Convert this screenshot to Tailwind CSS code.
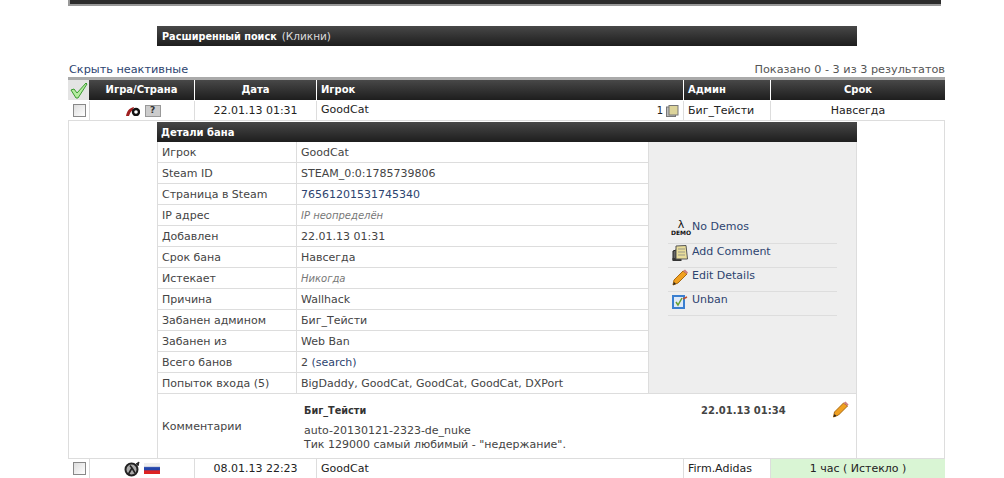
<!DOCTYPE html>
<html><head><meta charset="utf-8"><script src="https://cdn.jsdelivr.net/npm/@tailwindcss/browser@4"></script></head>
<body class="bg-white">
<div class="relative h-[478px] w-[1004px] overflow-hidden font-['DejaVu_Sans',Verdana,sans-serif] text-[11px] leading-[13px] text-[#333]">
  <div class="ml-[68px] h-[6px] w-[873px] border-b-2 border-l-2 border-[#999] bg-[#2c2c2c]"></div>
  <div class="ml-[157px] mt-[20px] flex h-[20px] w-[700px] items-center bg-gradient-to-b from-[#484848] to-[#1e1e1e] pl-[5px] text-white"><b class="text-[9.7px]">Расширенный поиск</b><span class="ml-[5px] text-[10.5px] text-[#ddd]">(Кликни)</span></div>
  <div class="ml-[69px] mt-[16px] flex h-[15px] w-[876px] items-center justify-between text-[11.25px]"><span class="text-[#2d4470]">Скрыть неактивные</span><span class="text-[#555]">Показано 0 - 3 из 3 результатов</span></div>
  <div class="ml-[68px] w-[877px]">
    <div class="h-[3px] bg-[#aaa]"></div>
    <div class="flex h-[20px] text-center text-[10px] font-bold text-white">
      <div class="flex w-[21px] items-center justify-center bg-[#e4e4e4]"><svg width="18" height="17" viewBox="0 0 18 17"><path d="M1 8 L4 7 L7 11 L16 1 L17 2 L8 16 L6 16 Z" fill="#b4eca0" stroke="#3a9a30" stroke-width="1"/></svg></div>
      <div class="w-[106px] border-r border-white bg-gradient-to-b from-[#484848] to-[#1e1e1e] leading-[20px]">Игра/Страна</div>
      <div class="w-[122px] border-r border-white bg-gradient-to-b from-[#484848] to-[#1e1e1e] leading-[20px]">Дата</div>
      <div class="w-[367px] border-r border-white bg-gradient-to-b from-[#484848] to-[#1e1e1e] pl-[4px] text-left leading-[20px]">Игрок</div>
      <div class="w-[87px] border-r border-white bg-gradient-to-b from-[#484848] to-[#1e1e1e] pl-[4px] text-left leading-[20px]">Админ</div>
      <div class="flex-1 bg-gradient-to-b from-[#484848] to-[#1e1e1e] leading-[20px]">Срок</div>
    </div>
    <div class="flex h-[21px] border-b border-[#ddd] pt-[1px] text-[#222]">
      <div class="flex w-[22px] items-center justify-center border-r border-[#ddd] pl-[1px]"><div class="size-[13px] border border-[#888] bg-gradient-to-br from-[#ddd] to-[#fff]"></div></div>
      <div class="flex w-[105px] items-center justify-center gap-[5px] border-r border-[#ddd] pl-[2px]">
        <svg width="14" height="10" viewBox="0 0 14 10"><path d="M0 10 C1 5 3 2 8 1 L7 4 C5 5 4 7 3 10 Z" fill="#a02020"/><circle cx="10" cy="6" r="3" fill="#fff" stroke="#111" stroke-width="2.4"/></svg>
        <div class="flex h-[12px] w-[16px] items-center justify-center border border-[#999] bg-[#ccc] text-[9px] font-bold text-[#333]">?</div>
      </div>
      <div class="flex w-[122px] items-center justify-center border-r border-[#ddd]">22.01.13 01:31</div>
      <div class="flex w-[367px] items-center justify-between border-r border-[#ddd] pl-[4px] pr-[4px]"><span class="-mt-[2px]">GoodCat</span>
        <span class="flex items-center gap-[3px] text-[10px]">1
          <svg width="13" height="12" viewBox="0 0 13 12"><rect x="0.5" y="2" width="9" height="9.5" fill="#bbb" stroke="#777"/><rect x="3" y="0.5" width="9" height="9.5" fill="#ddd49a" stroke="#777"/></svg></span></div>
      <div class="flex w-[87px] items-center border-r border-[#ddd] pl-[4px]">Биг_Тейсти</div>
      <div class="flex flex-1 items-center justify-center">Навсегда</div>
    </div>
    <div class="h-[338px] border border-t-0 border-[#ddd] pl-[88px] pr-[87px] pt-[1px] box-border">
      <div class="flex h-[20px] items-center bg-gradient-to-b from-[#484848] to-[#1e1e1e] pl-[4px] text-[10px] font-bold text-white">Детали бана</div>
      <div class="flex border-l border-r border-[#ddd]">
        <div class="w-[490px] text-[#444]">
          <div class="flex h-[21px] border-b border-[#ddd]"><div class="flex w-[139px] items-center border-r border-[#ddd] pl-[4px]">Игрок</div><div class="flex items-center pl-[4px]">GoodCat</div></div>
          <div class="flex h-[21px] border-b border-[#ddd]"><div class="flex w-[139px] items-center border-r border-[#ddd] pl-[4px]">Steam ID</div><div class="flex items-center pl-[4px]">STEAM_0:0:1785739806</div></div>
          <div class="flex h-[21px] border-b border-[#ddd]"><div class="flex w-[139px] items-center border-r border-[#ddd] pl-[4px]">Страница в Steam</div><div class="flex items-center pl-[4px] text-[#2d4470]">76561201531745340</div></div>
          <div class="flex h-[21px] border-b border-[#ddd]"><div class="flex w-[139px] items-center border-r border-[#ddd] pl-[4px]">IP адрес</div><div class="flex items-center pl-[4px] text-[10px] italic text-[#777]">IP неопределён</div></div>
          <div class="flex h-[21px] border-b border-[#ddd]"><div class="flex w-[139px] items-center border-r border-[#ddd] pl-[4px]">Добавлен</div><div class="flex items-center pl-[4px]">22.01.13 01:31</div></div>
          <div class="flex h-[21px] border-b border-[#ddd]"><div class="flex w-[139px] items-center border-r border-[#ddd] pl-[4px]">Срок бана</div><div class="flex items-center pl-[4px]">Навсегда</div></div>
          <div class="flex h-[21px] border-b border-[#ddd]"><div class="flex w-[139px] items-center border-r border-[#ddd] pl-[4px]">Истекает</div><div class="flex items-center pl-[4px] text-[10px] italic text-[#777]">Никогда</div></div>
          <div class="flex h-[21px] border-b border-[#ddd]"><div class="flex w-[139px] items-center border-r border-[#ddd] pl-[4px]">Причина</div><div class="flex items-center pl-[4px]">Wallhack</div></div>
          <div class="flex h-[21px] border-b border-[#ddd]"><div class="flex w-[139px] items-center border-r border-[#ddd] pl-[4px]">Забанен админом</div><div class="flex items-center pl-[4px]">Биг_Тейсти</div></div>
          <div class="flex h-[21px] border-b border-[#ddd]"><div class="flex w-[139px] items-center border-r border-[#ddd] pl-[4px]">Забанен из</div><div class="flex items-center pl-[4px]">Web Ban</div></div>
          <div class="flex h-[21px] border-b border-[#ddd]"><div class="flex w-[139px] items-center border-r border-[#ddd] pl-[4px]">Всего банов</div><div class="flex items-center pl-[4px]">2&nbsp;<span class="text-[#2d4470]">(search)</span></div></div>
          <div class="flex h-[21px] border-b border-[#ddd]"><div class="flex w-[139px] items-center border-r border-[#ddd] pl-[4px]">Попыток входа (5)</div><div class="flex items-center pl-[4px]">BigDaddy, GoodCat, GoodCat, GoodCat, DXPort</div></div>
        </div>
        <div class="flex h-[252px] flex-1 flex-col justify-center border-b border-l border-[#ddd] bg-[#eee] pl-[19px] pr-[19px] text-[#2d4470]">
          <div class="flex h-[24px] items-start gap-[2px] border-b border-[#ddd] pl-[4px]"><span class="flex w-[18px] flex-col items-center pt-[1px] text-[#111]"><span class="text-[11px] leading-[8px]">λ</span><span class="text-[6px] font-bold leading-[7px]">DEMO</span></span><span>No Demos</span></div>
          <div class="flex h-[24px] items-start gap-[4px] border-b border-[#ddd] pl-[4px] pt-[1px]"><svg class="shrink-0" width="16" height="17" viewBox="0 0 16 17"><path d="M1 6 L4 5 L4 13 L1 15 Z" fill="#666" stroke="#222"/><rect x="0.5" y="13" width="9" height="3" fill="#333"/><path d="M4 1 L14 0.5 L15.5 14 L4 14 Z" fill="#e8dc9a" stroke="#555"/><path d="M6 4h7M6 7h7M6 10h7" stroke="#998"/></svg><span>Add Comment</span></div>
          <div class="flex h-[24px] items-start gap-[4px] border-b border-[#ddd] pl-[4px] pt-[1px]"><svg class="shrink-0" width="16" height="17" viewBox="0 0 16 17"><path d="M1 16 L2 11 L11 2 L15 5 L6 14 Z" fill="#f0a020" stroke="#a86810"/><path d="M1 16 L2 13 L4 15 Z" fill="#222"/><path d="M11 2 L13 0.5 L16 3.5 L15 5 Z" fill="#d08080"/></svg><span>Edit Details</span></div>
          <div class="flex h-[24px] items-start gap-[4px] border-b border-[#ddd] pl-[4px] pt-[1px]"><svg class="shrink-0" width="16" height="17" viewBox="0 0 16 17"><rect x="1" y="3" width="11" height="12" fill="#dfeaf8" stroke="#3a7fd0" stroke-width="2"/><path d="M4 9 L6 12 L10 5" stroke="#6aa030" stroke-width="1.5" fill="none"/><path d="M11 6 L15 4" stroke="#c05030" stroke-width="1.5"/></svg><span>Unban</span></div>
        </div>
      </div>
      <div class="flex h-[65px] border-x border-b border-[#ddd] text-[#444]">
        <div class="flex w-[142px] items-center pl-[4px]">Комментарии</div>
        <div class="relative flex-1 pl-[4px] pt-[10px]">
          <div class="flex"><b class="w-[397px] text-[9.7px] text-[#333]">Биг_Тейсти</b><b class="text-[10px]">22.01.13 01:34</b></div>
          <div class="mt-[7px]">auto-20130121-2323-de_nuke</div>
          <div class="mt-[1px]">Тик 129000 самый любимый - "недержание".</div>
          <svg class="absolute right-[7px] top-[7px]" width="17" height="17" viewBox="0 0 16 17"><path d="M1 16 L2 11 L11 2 L15 5 L6 14 Z" fill="#f0a020" stroke="#a86810"/><path d="M1 16 L2 13 L4 15 Z" fill="#222"/><path d="M11 2 L13 0.5 L16 3.5 L15 5 Z" fill="#d08080"/></svg>
        </div>
      </div>
    </div>
    <div class="flex h-[19px] text-[#222]">
      <div class="flex w-[22px] items-center justify-center border-r border-[#ddd] pl-[1px]"><div class="size-[13px] border border-[#888] bg-gradient-to-br from-[#ddd] to-[#fff]"></div></div>
      <div class="flex w-[105px] items-center justify-center gap-[4px] border-r border-[#ddd]">
        <svg width="16" height="16" viewBox="0 0 16 16"><circle cx="7.5" cy="8.5" r="6" fill="#aaa" stroke="#222" stroke-width="2"/><path d="M12 3 L15 1 L14 5" fill="#222" stroke="#222"/><path d="M4.5 13 L8 7 L6 4.5 M8 7 L11 12" stroke="#222" stroke-width="1.6" fill="none"/></svg>
        <div class="h-[11px] w-[16px] bg-[linear-gradient(#eee_0_30%,#2244aa_42%_60%,#d22_72%)]"></div>
      </div>
      <div class="flex w-[122px] items-center justify-center border-r border-[#ddd]">08.01.13 22:23</div>
      <div class="flex w-[367px] items-center border-r border-[#ddd] pl-[4px]">GoodCat</div>
      <div class="flex w-[87px] items-center border-r border-[#ddd] pl-[4px]">Firm.Adidas</div>
      <div class="flex flex-1 items-center justify-center bg-[#d9f5d4]">1 час ( Истекло )</div>
    </div>
  </div>
</div>
</body></html>
